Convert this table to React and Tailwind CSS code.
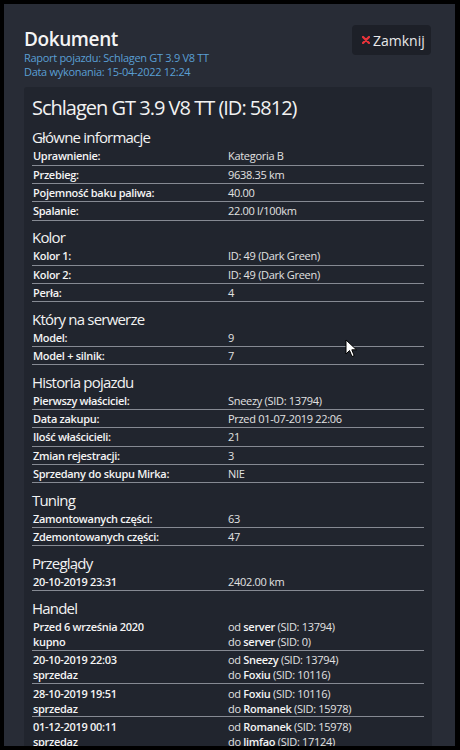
import React from "react";

const sections = [
  {
    title: "Główne informacje",
    rows: [
      ["Uprawnienie:", "Kategoria B"],
      ["Przebieg:", "9638.35 km"],
      ["Pojemność baku paliwa:", "40.00"],
      ["Spalanie:", "22.00 l/100km"],
    ],
  },
  {
    title: "Kolor",
    rows: [
      ["Kolor 1:", "ID: 49 (Dark Green)"],
      ["Kolor 2:", "ID: 49 (Dark Green)"],
      ["Perła:", "4"],
    ],
  },
  {
    title: "Który na serwerze",
    rows: [
      ["Model:", "9"],
      ["Model + silnik:", "7"],
    ],
  },
  {
    title: "Historia pojazdu",
    rows: [
      ["Pierwszy właściciel:", "Sneezy (SID: 13794)"],
      ["Data zakupu:", "Przed 01-07-2019 22:06"],
      ["Ilość właścicieli:", "21"],
      ["Zmian rejestracji:", "3"],
      ["Sprzedany do skupu Mirka:", "NIE"],
    ],
  },
  {
    title: "Tuning",
    rows: [
      ["Zamontowanych części:", "63"],
      ["Zdemontowanych części:", "47"],
    ],
  },
  {
    title: "Przeglądy",
    rows: [["20-10-2019 23:31", "2402.00 km"]],
  },
];

const trades = [
  { date: "Przed 6 września 2020", type: "kupno", from: ["server", "13794"], to: ["server", "0"] },
  { date: "20-10-2019 22:03", type: "sprzedaz", from: ["Sneezy", "13794"], to: ["Foxiu", "10116"] },
  { date: "28-10-2019 19:51", type: "sprzedaz", from: ["Foxiu", "10116"], to: ["Romanek", "15978"] },
  { date: "01-12-2019 00:11", type: "sprzedaz", from: ["Romanek", "15978"], to: ["limfao", "17124"] },
];

const Heading = ({ children }) => (
  <h3 className="mt-[7.4px] text-[15px] leading-[19px] tracking-[-0.8px] text-[#f2f2f2]">
    {children}
  </h3>
);

const Row = ({ label, value }) => (
  <div className="grid h-[18.35px] grid-cols-2 border-b border-[#868a93] px-[1px] text-[11px] leading-[17.35px] tracking-[-0.3px]">
    <span className="font-semibold text-[#f4f4f4]">{label}</span>
    <span className="text-[#e2e2e2]">{value}</span>
  </div>
);

const Party = ({ dir, who }) => (
  <div>
    {dir} <span className="font-semibold text-[#f4f4f4]">{who[0]}</span> (SID: {who[1]})
  </div>
);

const App = () => {
  return (
    <div
      className="relative h-[750px] w-[460px] overflow-hidden bg-black pb-[4px] pl-[4px] pr-[5px] pt-[4px]"
      style={{ fontFamily: '"Open Sans", "Noto Sans", sans-serif' }}
    >
      <div className="h-full overflow-hidden bg-[#282c36] pl-[20px] pr-[23px] pt-[21px]">
        <div className="flex items-start justify-between">
          <div className="pt-[2px]">
            <h1 className="text-[19px] font-semibold leading-[24px] tracking-[-0.4px] text-[#f4f4f4]">
              Dokument
            </h1>
            <p className="text-[11px] leading-[14px] tracking-[-0.3px] text-[#5a9fd4]">
              Raport pojazdu: Schlagen GT 3.9 V8 TT
            </p>
            <p className="text-[11px] leading-[14px] tracking-[-0.3px] text-[#5a9fd4]">
              Data wykonania: 15-04-2022 12:24
            </p>
          </div>
          <button className="mr-[1px] flex h-[30px] w-[79px] items-center gap-[3px] rounded-[4px] bg-[#1d2028] pl-[10px] text-[14px] text-[#e8e8e8]">
            <svg width="8" height="8" viewBox="0 0 8 8">
              <path d="M1 1L7 7M7 1L1 7" stroke="#e8333a" strokeWidth="2.3" strokeLinecap="round" />
            </svg>
            Zamknij
          </button>
        </div>

        <div className="mt-[8px] rounded-[3px] bg-[#21252e] px-[8px] pb-[20px] pt-[8px]">
          <h2 className="text-[20px] leading-[26px] tracking-[-1px] text-[#f2f2f2]">
            Schlagen GT 3.9 V8 TT (ID: 5812)
          </h2>

          {sections.map((s) => (
            <div key={s.title}>
              <Heading>{s.title}</Heading>
              {s.rows.map(([l, v]) => (
                <Row key={l} label={l} value={v} />
              ))}
            </div>
          ))}

          <Heading>Handel</Heading>
          {trades.map((t) => (
            <div
              key={t.date}
              className="grid h-[33.3px] grid-cols-2 border-b border-[#868a93] px-[1px] pt-[1.5px] text-[11px] leading-[15px] tracking-[-0.3px]"
            >
              <div className="font-semibold text-[#f4f4f4]">
                <div>{t.date}</div>
                <div>{t.type}</div>
              </div>
              <div className="text-[#e2e2e2]">
                <Party dir="od" who={t.from} />
                <Party dir="do" who={t.to} />
              </div>
            </div>
          ))}
        </div>
      </div>

      <svg className="absolute left-[345px] top-[339px]" width="13" height="19" viewBox="0 0 13 19">
        <path
          d="M1 1L1 15L4.5 11.5L7 17.5L9.2 16.6L6.8 10.8L11.5 10.8Z"
          fill="#ffffff"
          stroke="#000000"
          strokeWidth="1"
          strokeLinejoin="round"
        />
      </svg>
    </div>
  );
};

export default App;
